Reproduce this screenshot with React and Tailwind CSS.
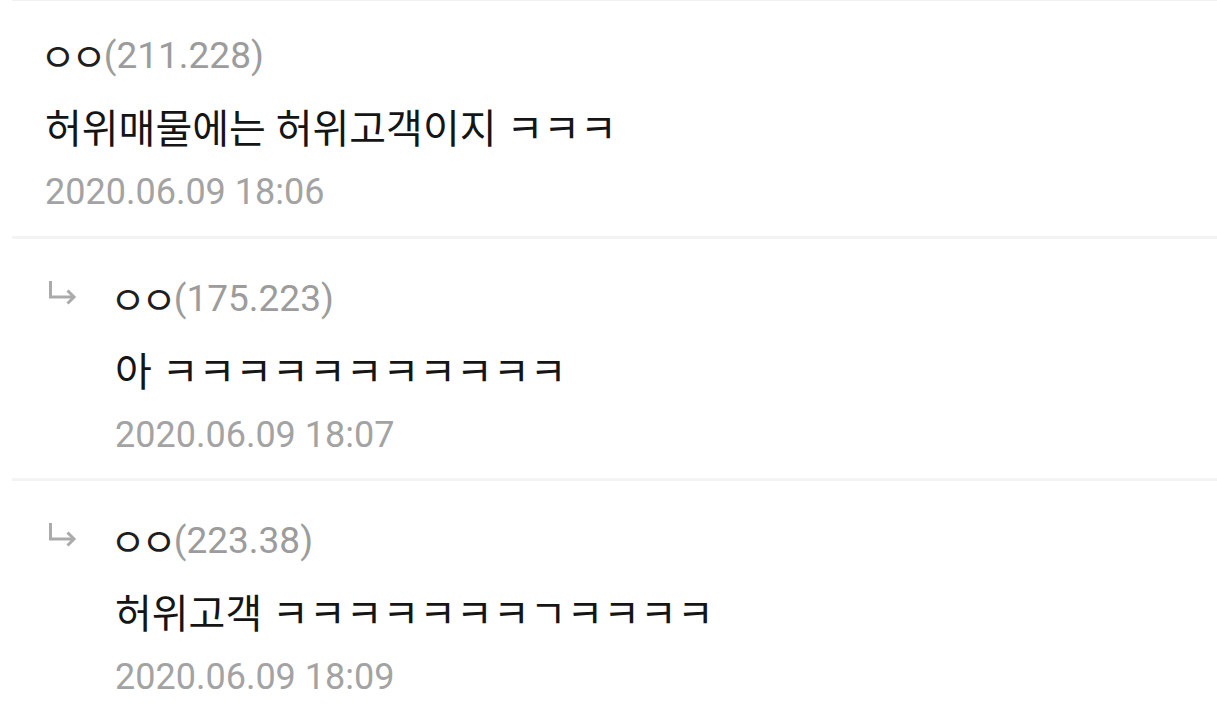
import { Fragment } from 'react'

const comments = [
  { ip: '211.228', text: '허위매물에는 허위고객이지 ㅋㅋㅋ', date: '2020.06.09 18:06', reply: false },
  { ip: '175.223', text: '아 ㅋㅋㅋㅋㅋㅋㅋㅋㅋㅋㅋ', date: '2020.06.09 18:07', reply: true },
  { ip: '223.38', text: '허위고객 ㅋㅋㅋㅋㅋㅋㅋㄱㅋㅋㅋㅋ', date: '2020.06.09 18:09', reply: true },
]

function ReplyArrow() {
  return (
    <svg width="30" height="26" viewBox="0 0 30 26" fill="none" className="shrink-0">
      <path d="M3.5 1 V17 H27" stroke="#ababab" strokeWidth="3" />
      <path d="M20.5 10.5 L27 17 L20.5 23.5" stroke="#ababab" strokeWidth="3" />
    </svg>
  )
}

function Comment({ ip, text, date, reply, first, last }) {
  let box = 'border-t-[3px] border-[#f3f3f3] pt-[34px] pb-[18px]'
  if (first) box = 'border-t border-[#f1f1f1] pt-[29px] pb-[19px]'
  if (last) box = 'border-t-[3px] border-[#f3f3f3] pt-[34px] pb-[20px]'
  return (
    <div className={box}>
      <div className={reply ? 'flex pl-[35px]' : 'flex pl-[33px]'}>
        {reply && (
          <div className="w-[68px] h-[50px] pt-[7px]">
            <ReplyArrow />
          </div>
        )}
        <div>
          <div className="h-[50px] leading-[50px] text-[37px] whitespace-nowrap">
            <span className="inline-block -ml-[5px] mr-[2px] translate-y-[3px] text-[#1e1e1e] text-[39px] tracking-[-5px]">
              ㅇㅇ
            </span>
            <span className="text-[#9c9c9c]">({ip})</span>
          </div>
          <div className="mt-[25px] h-[50px] leading-[50px] text-[40px] text-[#151515] whitespace-nowrap">
            {text}
          </div>
          <div className="mt-[12px] h-[50px] leading-[50px] text-[36px] text-[#a3a3a3] whitespace-nowrap">
            {date}
          </div>
        </div>
      </div>
    </div>
  )
}

export default function App() {
  return (
    <div
      className="w-[1217px] h-[712px] overflow-hidden bg-white"
      style={{ fontFamily: 'Roboto, "Noto Sans CJK KR", sans-serif' }}
    >
      <div className="ml-[12px]">
        {comments.map((c, i) => (
          <Fragment key={i}>
            <Comment {...c} first={i === 0} last={i === comments.length - 1} />
          </Fragment>
        ))}
      </div>
    </div>
  )
}
